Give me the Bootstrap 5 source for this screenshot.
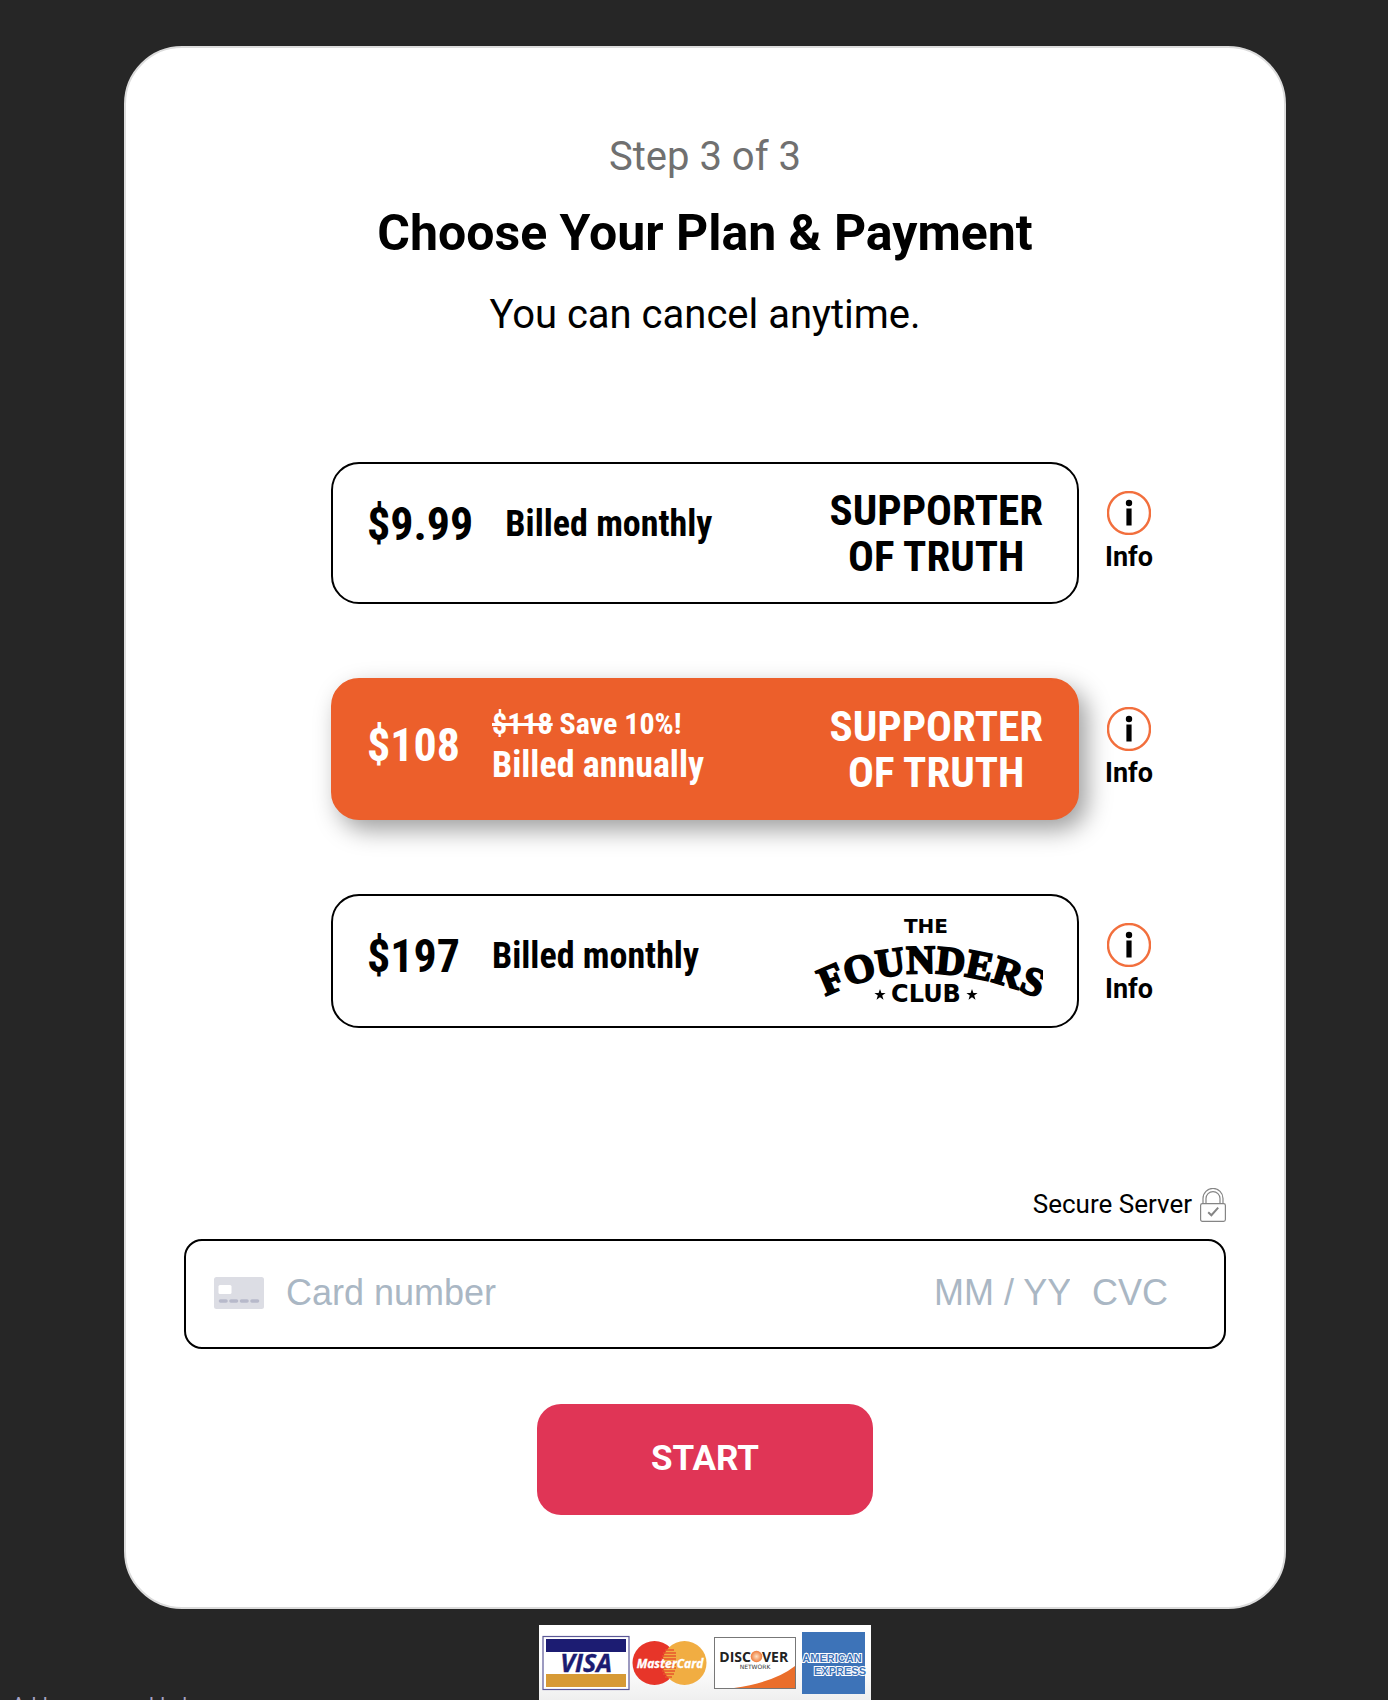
<!DOCTYPE html>
<html lang="en">
<head>
<meta charset="utf-8">
<meta name="viewport" content="width=device-width, initial-scale=1">
<title>Choose Your Plan &amp; Payment</title>
<link href="https://cdn.jsdelivr.net/npm/bootstrap@5.3.0/dist/css/bootstrap.min.css" rel="stylesheet">
<style>
  body { background: #262626; color: #000; font-family: Roboto, "Liberation Sans", sans-serif; padding: 46px 102px 0 124px; }
  .checkout { border: 2px solid #dcdcdc; border-radius: 58px; padding: 85px 58px 92px; }
  .step-line { font-size: 40px; line-height: 48px; color: #707070; }
  .headline { font-size: 50px; line-height: 60px; font-weight: 700; margin: 22px 0 28px; }
  .subline { font-size: 40px; line-height: 48px; margin: 0 0 123px; }
  .plan-list { gap: 74px; margin-bottom: 160px; }
  .plan-side { flex: 1 1 0; }
  .plan-box { flex: 0 1 748px; min-height: 142px; padding: 0 34px; border: 2px solid #000; border-radius: 28px; color: #000; background: #fff; font-family: "Roboto Condensed", "Liberation Sans Narrow", Roboto, sans-serif; font-weight: 700; }
  .plan-box.short { min-height: 134px; }
  .btn-check:checked + .plan-box { background: #ec5f2b; border-color: #ec5f2b; color: #fff; box-shadow: 8px 10px 24px rgba(0,0,0,.38); }
  .plan-terms { gap: 32px; padding-top: 32px; }
  .plan-terms.two-line { padding: 0 0 8px; }
  .price { font-size: 46px; line-height: 56px; }
  .term { font-size: 36px; line-height: 42px; }
  .saving { font-size: 30px; line-height: 40px; }
  .tier { font-size: 43px; line-height: 46px; }
  .info-btn { margin: 29px 0 0 26px; gap: 6px; font-size: 27px; line-height: 32px; font-weight: 700; color: #000; }
  .secure { font-size: 26px; line-height: 32px; gap: 8px; margin-bottom: 17px; }
  .card-entry { border: 2px solid #000; border-radius: 18px; padding: 0 28px 2px 28px; height: 110px; gap: 22px; font-family: "Liberation Sans", sans-serif; }
  .card-entry input { border: 0; outline: 0; padding: 0; background: none; font-size: 36px; line-height: 48px; color: #32325d; min-width: 0; }
  .card-entry input::placeholder { color: #aab7c4; opacity: 1; }
  .expiry { width: 136px; }
  .cvc { width: 104px; }
  .start-btn { width: 336px; height: 111px; margin-top: 55px; border-radius: 24px; background: #e03556; color: #fff; font-size: 35px; font-weight: 700; }
  .start-btn:hover { background: #c92d4b; color: #fff; }
  .brands { margin-top: 16px; width: 332px; background: linear-gradient(#fff 40%, #e8e8e8); }
  .foot-note { color: #a6a3c4; font-size: 20px; line-height: 24px; margin: -24px 0 0 -112px; }
</style>
</head>
<body>
<main class="checkout bg-white">
  <form class="d-flex flex-column">
    <header class="text-center">
      <div class="step-line">Step 3 of 3</div>
      <h1 class="headline">Choose Your Plan &amp; Payment</h1>
      <p class="subline">You can cancel anytime.</p>
    </header>

    <div class="plan-list d-flex flex-column">
      <div class="d-flex align-items-start">
        <div class="plan-side"></div>
        <input class="btn-check" type="radio" name="plan" id="plan-month">
        <label class="plan-box btn d-flex align-items-center justify-content-between" for="plan-month">
          <span class="plan-terms d-flex align-items-center align-self-start"><span class="price">$9.99</span><span class="term">Billed monthly</span></span>
          <span class="tier text-center">SUPPORTER<br>OF TRUTH</span>
        </label>
        <div class="plan-side">
          <button type="button" class="info-btn btn border-0 p-0 d-flex flex-column align-items-center">
            <svg width="44" height="44" viewBox="0 0 44 44" aria-hidden="true"><circle cx="22" cy="22" r="21" fill="#fff" stroke="#f26f3d" stroke-width="2.4"/><circle cx="22" cy="12" r="3.200"/><path d="M19.400 17.500h5.200v17h-5.200z"/></svg>
            <span>Info</span>
          </button>
        </div>
      </div>

      <div class="d-flex align-items-start">
        <div class="plan-side"></div>
        <input class="btn-check" type="radio" name="plan" id="plan-year" checked>
        <label class="plan-box btn d-flex align-items-center justify-content-between" for="plan-year">
          <span class="plan-terms two-line d-flex align-items-center"><span class="price">$108</span><span class="text-start"><span class="saving d-block"><s>$118</s> Save 10%!</span><span class="term d-block">Billed annually</span></span></span>
          <span class="tier text-center">SUPPORTER<br>OF TRUTH</span>
        </label>
        <div class="plan-side">
          <button type="button" class="info-btn btn border-0 p-0 d-flex flex-column align-items-center">
            <svg width="44" height="44" viewBox="0 0 44 44" aria-hidden="true"><circle cx="22" cy="22" r="21" fill="#fff" stroke="#f26f3d" stroke-width="2.4"/><circle cx="22" cy="12" r="3.200"/><path d="M19.400 17.500h5.200v17h-5.200z"/></svg>
            <span>Info</span>
          </button>
        </div>
      </div>

      <div class="d-flex align-items-start">
        <div class="plan-side"></div>
        <input class="btn-check" type="radio" name="plan" id="plan-founders">
        <label class="plan-box short btn d-flex align-items-center justify-content-between" for="plan-founders">
          <span class="plan-terms d-flex align-items-center align-self-start"><span class="price">$197</span><span class="term">Billed monthly</span></span>
          <svg width="232" height="92" viewBox="0 0 232 92" role="img" aria-label="The Founders Club">
            <defs><path id="arch" d="M13 82C76 50 154 50 229 84"/></defs>
            <text x="115" y="18" text-anchor="middle" font-family="DejaVu Sans" font-weight="700" font-size="20">THE</text>
            <text font-family="Liberation Serif" font-weight="700" font-size="40" stroke="#000" stroke-width="2"><textPath href="#arch" startOffset="50%" text-anchor="middle">FOUNDERS</textPath></text>
            <text x="115" y="87" text-anchor="middle" font-family="DejaVu Sans" font-weight="700" font-size="24">CLUB</text>
            <path id="star" d="M69 74l1.400 4h4.200l-3.400 2.600 1.300 4.200-3.500-2.500-3.500 2.500 1.300-4.200-3.400-2.600h4.200z"/>
            <use href="#star" x="92"/>
          </svg>
        </label>
        <div class="plan-side">
          <button type="button" class="info-btn btn border-0 p-0 d-flex flex-column align-items-center">
            <svg width="44" height="44" viewBox="0 0 44 44" aria-hidden="true"><circle cx="22" cy="22" r="21" fill="#fff" stroke="#f26f3d" stroke-width="2.4"/><circle cx="22" cy="12" r="3.200"/><path d="M19.400 17.500h5.200v17h-5.200z"/></svg>
            <span>Info</span>
          </button>
        </div>
      </div>
    </div>

    <div class="secure d-flex justify-content-end align-items-start">
      <span>Secure Server</span>
      <svg width="26" height="34" viewBox="0 0 26 34" fill="none" stroke="#858585" stroke-width="1.2" aria-hidden="true">
        <rect x=".6" y="15.6" width="24.8" height="17.8" rx="1.8"/>
        <path d="M3 15.500V10.400a10 10 0 0 1 20 0v5.100M6 15.500V10.600a7 7 0 0 1 14 0v4.900"/>
        <path d="M8.200 24.200l3.200 3 6.800-7.600" stroke-width="2"/>
      </svg>
    </div>

    <div class="card-entry d-flex align-items-center">
      <svg class="flex-shrink-0" width="50" height="32" viewBox="0 0 50 32" aria-hidden="true">
        <rect width="50" height="32" rx="2.500" fill="#dcdde4"/><rect x="4.500" y="8" width="13" height="9" rx="1.500" fill="#fff"/>
        <path d="M6.500 24h5.500m5 0h5.500m5 0h5.500m5 0h5.500" stroke="#b7b9ca" stroke-width="3.600" stroke-linecap="round"/>
      </svg>
      <input class="flex-fill" type="text" placeholder="Card number" aria-label="Card number">
      <input class="expiry" type="text" placeholder="MM / YY" aria-label="Expiry date">
      <input class="cvc" type="text" placeholder="CVC" aria-label="Security code">
    </div>

    <button type="button" class="start-btn btn border-0 align-self-center">START</button>
  </form>
</main>

<div class="brands mx-auto">
  <svg class="d-block" width="332" height="92" viewBox="0 0 332 92" role="img" aria-label="Accepted cards">
    <defs>
      <radialGradient id="sun"><stop offset="0" stop-color="#fde0c4"/><stop offset="1" stop-color="#ee7a38"/></radialGradient>
    </defs>
    <rect x="4" y="11.500" width="86" height="53" fill="#fff" stroke="#5b5897" stroke-width="1.200"/>
    <path fill="#1c1c72" d="M7 14h80v13H7z"/><path fill="#d79a35" d="M7 49h80v13H7z"/>
    <text x="47" y="47" text-anchor="middle" font-family="Open Sans" font-weight="700" font-style="italic" font-size="25" fill="#1c1c72" stroke="#1c1c72" stroke-width=".4">VISA</text>
    <circle cx="115.500" cy="38" r="22" fill="#e73529"/><circle cx="145.500" cy="38" r="22" fill="#f1ad42"/>
    <path d="M126 25h9m-11 3h13m-14 3h14m-15 3h15m-15 3h15m-15 3h15m-15 3h15m-14 3h13m-12 3h11m-9 3h7" stroke="#e8542c" stroke-width="1.500"/>
    <text x="131" y="43" text-anchor="middle" font-family="Open Sans" font-weight="700" font-style="italic" font-size="12" fill="#fff" stroke="#fff" stroke-width=".3">MasterCard</text>
    <rect x="175.500" y="12.500" width="81" height="51" fill="#fff" stroke="#777"/>
    <path d="M195 63Q236 57 256 41V63z" fill="#ea6e2b"/>
    <text x="212" y="37" text-anchor="end" font-family="Open Sans" font-weight="700" font-size="14" fill="#222">DISC</text>
    <circle cx="217.500" cy="31.500" r="5.800" fill="url(#sun)"/>
    <text x="223" y="37" font-family="Open Sans" font-weight="700" font-size="14" fill="#222">VER</text>
    <text x="216" y="44" text-anchor="middle" font-family="DejaVu Sans" font-size="6" fill="#333">NETWORK</text>
    <path fill="#3d73b8" d="M263 7h63v62h-63z"/>
    <g font-family="Liberation Sans" font-weight="700" font-size="11" fill="#3d73b8" stroke="#fff" stroke-width="2" paint-order="stroke">
      <text x="293" y="37" text-anchor="middle">AMERICAN</text><text x="327" y="50" text-anchor="end">EXPRESS</text>
    </g>
  </svg>
</div>
<footer class="foot-note">Address was added</footer>
<script src="https://cdn.jsdelivr.net/npm/bootstrap@5.3.0/dist/js/bootstrap.bundle.min.js"></script>
</body>
</html>
